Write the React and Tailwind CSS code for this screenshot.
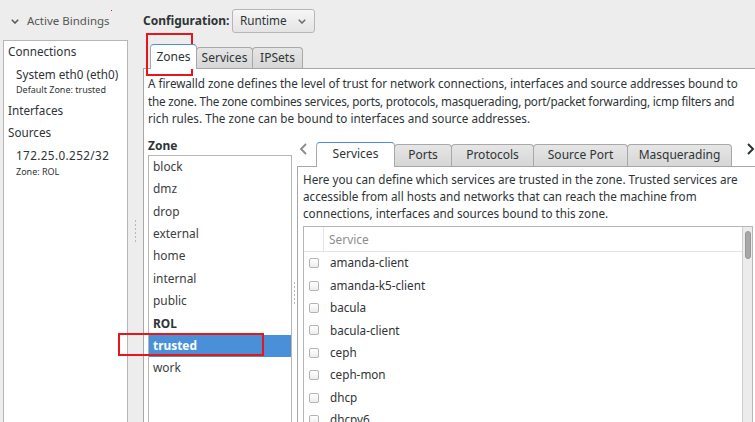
import React from 'react'

const font = { fontFamily: '"Noto Sans", "DejaVu Sans", sans-serif' }

const zones = ['block', 'dmz', 'drop', 'external', 'home', 'internal', 'public', 'ROL', 'trusted', 'work']
const services = ['amanda-client', 'amanda-k5-client', 'bacula', 'bacula-client', 'ceph', 'ceph-mon', 'dhcp', 'dhcpv6']

function Chevron({ className }) {
  return (
    <svg className={className} width="8" height="5" viewBox="0 0 8 5">
      <polyline points="0.8,0.8 4,4 7.2,0.8" fill="none" stroke="currentColor" strokeWidth="1.5" />
    </svg>
  )
}

function Grip() {
  return (
    <div className="flex flex-col gap-[2px]">
      {[0, 1, 2, 3, 4, 5].map((i) => (
        <div key={i} className="w-[1px] h-[2px] bg-[#b8b8b8]" />
      ))}
    </div>
  )
}

function Tab({ label, active, w, h }) {
  if (active) {
    return (
      <div className={`${w} h-[25px] shrink-0 bg-white border border-b-0 border-[#a8a8a8] border-t-[#4a90d9] rounded-t-[4px] flex items-center justify-center text-[12px] text-[#2e3436] relative z-10 -mb-px pb-px`}>
        {label}
      </div>
    )
  }
  return (
    <div className={`${w} ${h} shrink-0 bg-gradient-to-b from-[#e6e6e6] to-[#d6d6d6] border border-b-0 border-[#a8a8a8] rounded-t-[4px] flex items-center justify-center text-[12px] text-[#2e3436] -ml-px`}>
      {label}
    </div>
  )
}

function Checkbox() {
  return <div className="w-[10px] h-[10px] rounded-[2px] border border-[#b4b4b4] bg-gradient-to-b from-white to-[#ececec]" />
}

export default function App() {
  return (
    <div className="w-[755px] h-[422px] bg-[#ededed] overflow-hidden relative flex" style={font}>
      {/* left: active bindings */}
      <div className="w-[128px] shrink-0 flex flex-col">
        <div className="h-[40px] flex items-center pt-[2px] pl-[11px] gap-[8px] text-[11.5px] text-[#555753] whitespace-nowrap">
          <Chevron className="text-[#555753]" />
          <span>Active Bindings</span>
        </div>
        <div className="ml-[3px] flex-1 bg-white border border-b-0 border-[#b6b6b6] text-[#2e3436] text-[11.7px] whitespace-nowrap">
          <div className="h-[22px] flex items-center pl-[4px]">Connections</div>
          <div className="mt-[3px] h-[17px] flex items-center pl-[12px]">System eth0 (eth0)</div>
          <div className="h-[14px] flex items-center pl-[12px] text-[9px]">Default Zone: trusted</div>
          <div className="mt-[3px] h-[22px] flex items-center pl-[4px]">Interfaces</div>
          <div className="h-[22px] flex items-center pl-[4px]">Sources</div>
          <div className="mt-[3px] h-[18px] flex items-center pl-[12px] tracking-[0.4px]">172.25.0.252/32</div>
          <div className="h-[14px] flex items-center pl-[12px] text-[9px]">Zone: ROL</div>
        </div>
      </div>

      {/* paned grip */}
      <div className="w-[15px] shrink-0 flex justify-center pt-[220px]">
        <Grip />
      </div>

      {/* right */}
      <div className="flex-1 flex flex-col min-w-0">
        <div className="h-[43px] flex items-start pt-[9px] gap-[5px]">
          <div className="h-[24px] flex items-center text-[12px] font-bold text-[#2e3436] whitespace-nowrap w-[84px]">Configuration:</div>
          <div className="w-[83px] h-[24px] rounded-[3px] border border-[#b6b6b6] bg-gradient-to-b from-[#f6f6f6] to-[#e4e4e4] flex items-center justify-between pl-[7px] pr-[8px] text-[11.7px] text-[#2e3436]">
            <span>Runtime</span>
            <Chevron className="text-[#6a6a6a]" />
          </div>
        </div>

        <div className="flex items-end pl-[7px] h-[25px]">
          <Tab label="Zones" active w="w-[47px]" />
          <Tab label="Services" w="w-[57px]" h="h-[21px]" />
          <Tab label="IPSets" w="w-[51px]" h="h-[21px]" />
        </div>

        {/* notebook page */}
        <div className="flex-1 bg-white border-l border-t border-[#a8a8a8] flex flex-col min-h-0">
          <div className="pl-[4px] pt-[6px] text-[11.7px] leading-[17.5px] text-[#2e3436] whitespace-nowrap">
            <div className="tracking-[-0.05px]">A firewalld zone defines the level of trust for network connections, interfaces and source addresses bound to</div>
            <div className="tracking-[-0.22px]">the zone. The zone combines services, ports, protocols, masquerading, port/packet forwarding, icmp filters and</div>
            <div>rich rules. The zone can be bound to interfaces and source addresses.</div>
          </div>

          <div className="flex flex-1 min-h-0 mt-[8px]">
            {/* zone list */}
            <div className="w-[148px] shrink-0 pl-[4px] flex flex-col">
              <div className="h-[19px] shrink-0 flex items-center pt-[1px] text-[12px] font-bold text-[#2e3436]">Zone</div>
              <div className="flex-1 border border-b-0 border-[#b6b6b6] bg-white">
                {zones.map((z) => (
                  <div
                    key={z}
                    className={
                      'h-[22.4px] flex items-center pl-[4px] text-[11.9px] ' +
                      (z === 'trusted'
                        ? 'bg-[#4a90d9] text-white font-bold'
                        : z === 'ROL'
                        ? 'font-bold text-[#2e3436]'
                        : 'text-[#3a3d3e]')
                    }
                  >
                    {z}
                  </div>
                ))}
              </div>
            </div>

            {/* grip */}
            <div className="w-[5px] shrink-0 flex justify-center pt-[146px]">
              <Grip />
            </div>

            {/* inner notebook */}
            <div className="flex-1 flex flex-col min-w-0">
              <div className="h-[30px] shrink-0 flex items-end">
                <div className="w-[19px] h-[25px] shrink-0 flex items-center pl-[2px] pb-[8px] text-[#8a8a8a]">
                  <svg width="8" height="12" viewBox="0 0 8 12">
                    <polyline points="7,1 2,6 7,11" fill="none" stroke="currentColor" strokeWidth="1.8" />
                  </svg>
                </div>
                <Tab label="Services" active w="w-[79px]" />
                <Tab label="Ports" w="w-[58px]" h="h-[22px]" />
                <Tab label="Protocols" w="w-[83px]" h="h-[22px]" />
                <Tab label="Source Port" w="w-[95px]" h="h-[22px]" />
                <Tab label="Masquerading" w="w-[105px]" h="h-[22px]" />
                <div className="ml-auto h-[25px] flex items-center pb-[8px] text-[#2e3436]">
                  <svg width="8" height="12" viewBox="0 0 8 12">
                    <polyline points="1,1 6,6 1,11" fill="none" stroke="currentColor" strokeWidth="2" />
                  </svg>
                </div>
              </div>
              <div className="flex-1 border-l border-t border-[#a8a8a8] flex flex-col pl-[5px] min-h-0">
                <div className="pt-[4px] shrink-0 text-[11.7px] leading-[17px] text-[#2e3436] whitespace-nowrap">
                  <div>Here you can define which services are trusted in the zone. Trusted services are</div>
                  <div>accessible from all hosts and networks that can reach the machine from</div>
                  <div>connections, interfaces and sources bound to this zone.</div>
                </div>
                <div className="mt-[4px] mr-[2px] flex-1 border border-b-0 border-[#b6b6b6] flex min-h-0">
                  <div className="flex-1 flex flex-col">
                    <div className="h-[25px] shrink-0 flex border-b border-[#e4e4e4]">
                      <div className="w-[20px] border-r border-[#e4e4e4]" />
                      <div className="flex items-center pl-[5px] pt-[2px] text-[11.9px] text-[#8b8e8f]">Service</div>
                    </div>
                    {services.map((s) => (
                      <div key={s} className="h-[22.4px] shrink-0 flex items-center pt-[1px]">
                        <div className="w-[20px] flex justify-center">
                          <Checkbox />
                        </div>
                        <div className="pl-[6px] text-[11.7px] text-[#2e3436]">{s}</div>
                      </div>
                    ))}
                  </div>
                  <div className="w-[10px] border-l border-[#cfcfcf] bg-[#ececec] pt-[4px] flex justify-center">
                    <div className="w-[6px] h-[28px] rounded-full bg-[#a8a8a8] border border-[#979797]" />
                  </div>
                </div>
              </div>
            </div>
          </div>
        </div>
      </div>

      {/* annotation boxes */}
      <div className="absolute left-[111px] top-[10px] w-[1px] h-[1px] bg-[#e8161b]" />
      <div className="absolute left-[146px] top-[33px] w-[47px] h-[43px] border-2 border-[#e8161b] pointer-events-none" />
      <div className="absolute left-[118px] top-[333px] w-[146px] h-[23px] border-2 border-[#e8161b] pointer-events-none" />
    </div>
  )
}
